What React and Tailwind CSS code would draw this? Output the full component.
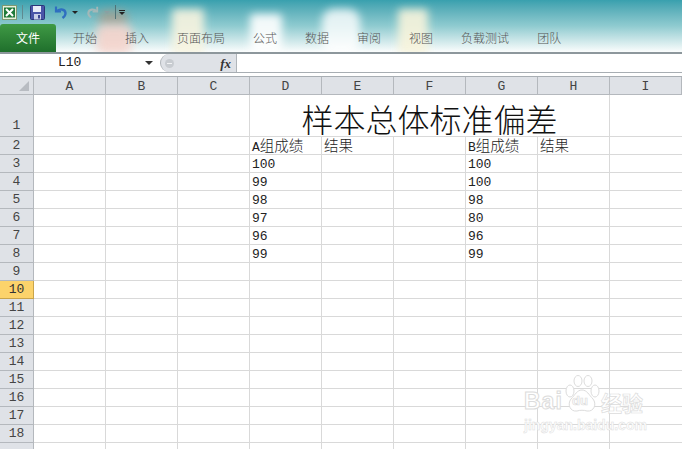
import React from 'react';

const tabs = ['开始', '插入', '页面布局', '公式', '数据', '审阅', '视图', '负载测试', '团队'];
const columns = ['A', 'B', 'C', 'D', 'E', 'F', 'G', 'H', 'I'];
const rowNumbers = [2, 3, 4, 5, 6, 7, 8, 9, 10, 11, 12, 13, 14, 15, 16, 17, 18];

// cell contents by row number
const cells = {
    2: { D: 'A组成绩', E: '结果', G: 'B组成绩', H: '结果' },
    3: { D: '100', G: '100' },
    4: { D: '99', G: '100' },
    5: { D: '98', G: '98' },
    6: { D: '97', G: '80' },
    7: { D: '96', G: '96' },
    8: { D: '99', G: '99' },
};

const QuickAccess = () => (
    <div className="flex items-center h-[24px] pl-[2px] relative z-10">
        <svg width="15" height="15" viewBox="0 0 15 15">
            <rect x="0.5" y="0.5" width="14" height="14" fill="#e8f0dc" stroke="#7d9a72" />
            <rect x="2" y="2.5" width="11" height="10" fill="#1f7a3a" />
            <path d="M4 4l7 7M11 4l-7 7" stroke="#fff" strokeWidth="2" />
        </svg>
        <div className="w-px h-[14px] bg-[#5f8a90] ml-[5px]" />
        <svg className="ml-[7px]" width="15" height="15" viewBox="0 0 15 15">
            <rect x="0.5" y="0.5" width="14" height="14" rx="1" fill="#4a55a8" stroke="#2b3478" />
            <rect x="3" y="1" width="8" height="6" fill="#e8ecf8" />
            <rect x="4" y="9" width="7" height="5.5" fill="#c9cfe8" />
            <rect x="8" y="10" width="2" height="3.5" fill="#3a4490" />
        </svg>
        <svg className="ml-[8px]" width="15" height="14" viewBox="0 0 15 14" fill="none">
            <path d="M3 1.5v5h5" stroke="#2f6fc0" strokeWidth="2.2" />
            <path d="M3.5 6.5C6 3.5 12 3.5 12.5 8c.2 2-1 3.500-3 5" stroke="#2f6fc0" strokeWidth="2.4" />
        </svg>
        <div className="ml-[4px] w-0 h-0 border-x-[3px] border-x-transparent border-t-[3px] border-t-[#222]" />
        <svg className="ml-[8px]" width="14" height="14" viewBox="0 0 15 14" fill="none">
            <path d="M12 1.500v5H7" stroke="#a3b8b8" strokeWidth="2" />
            <path d="M11.500 6.500C9 3.500 3 3.500 2.500 8c-.2 2 1 3.500 3 5" stroke="#a3b8b8" strokeWidth="2.200" />
        </svg>
        <div className="ml-[4px] w-0 h-0 border-x-[3px] border-x-transparent border-t-[3px] border-t-[#8aa0a2]" />
        <div className="w-px h-[14px] bg-[#4f7378] ml-[5px]" />
        <div className="ml-[3px] flex flex-col items-center gap-[1px]">
            <div className="w-[6px] h-px bg-[#222]" />
            <div className="w-0 h-0 border-x-[3px] border-x-transparent border-t-[3px] border-t-[#222]" />
        </div>
    </div>
);

const Ribbon = () => (
    <div className="relative h-[52px] overflow-hidden bg-gradient-to-b from-[#38a0ae] via-[#8fcbd0] to-[#fbfdfd]">
        {/* blurred shapes of the window theme */}
        <div className="absolute left-[98px] top-[10px] w-[30px] h-[16px] rounded-lg bg-[#a89a88] opacity-70 blur-[4px]" />
        <div className="absolute left-[96px] top-[24px] w-[36px] h-[30px] rounded-lg bg-[#f6d4cc] opacity-90 blur-[5px]" />
        <div className="absolute left-[172px] top-[9px] w-[32px] h-[46px] rounded bg-[#f8f4e0] opacity-90 blur-[4px]" />
        <div className="absolute left-[250px] top-[14px] w-[32px] h-[40px] rounded bg-white opacity-90 blur-[4px]" />
        <div className="absolute left-[322px] top-[9px] w-[38px] h-[46px] rounded-xl bg-white opacity-80 blur-[4px]" />
        <div className="absolute left-[398px] top-[9px] w-[30px] h-[46px] rounded bg-[#f8f4dc] opacity-90 blur-[4px]" />
        <QuickAccess />
        <div className="relative z-10 flex items-center h-[28px]">
            <div className="w-[56px] h-[28px] flex items-center justify-center rounded-t-[3px] bg-gradient-to-b from-[#3f9a45] to-[#1f6f2c] text-white text-[12px] font-['Noto_Sans_CJK_SC',sans-serif]">
                文件
            </div>
            <div className="ml-[17px] flex gap-[28px] text-[12px] text-[#555] font-['Noto_Sans_CJK_SC',sans-serif] font-light">
                {tabs.map((tab) => (
                    <span key={tab}>{tab}</span>
                ))}
            </div>
        </div>
    </div>
);

const FormulaBar = () => (
    <div className="h-[21px] border-t-2 border-b-[1px] border-t-[#8d979c] border-b-[#a8aeb3] bg-white flex">
        <div className="w-[160px] flex items-center pl-[58px] pr-[7px] justify-between font-['Liberation_Mono',monospace] text-[13px] text-[#222]">
            <span>L10</span>
            <div className="w-0 h-0 border-x-[4px] border-x-transparent border-t-[4px] border-t-[#333]" />
        </div>
        <div className="w-[77px] flex items-center rounded-l-full bg-[#dfe2e7] border-l border-[#b0b5ba] border-r-[#b0b5ba] border-r pl-[4px] pr-[5px] justify-between">
            <div className="w-[9px] h-[9px] rounded-full bg-[#c8ccd1] flex items-center justify-center">
                <div className="w-[5px] h-px bg-[#f2f3f5]" />
            </div>
            <span className="font-['Liberation_Serif',serif] italic font-bold text-[13px] leading-none text-[#333]">fx</span>
        </div>
        <div className="flex-1" />
    </div>
);

const Cell = ({ text }) => {
    if (!text) return null;
    const numeric = /^[0-9]+$/.test(text);
    // latin letters and digits run narrower than the chinese ones
    return (
        <span className={`pl-[2px] whitespace-nowrap leading-[16px] text-[13px] text-[#222] font-['Liberation_Mono','Noto_Sans_CJK_SC',monospace] ${numeric ? 'pt-[3px]' : 'pt-[1px]'}`}>
            {text.split(/(?<=[A-Z0-9])(?=[^A-Z0-9])/).map((part) =>
                /[A-Z0-9]/.test(part) ? (
                    <span key={part}>{part}</span>
                ) : (
                    <span key={part} className="text-[14.500px] leading-[16px] font-light font-['Noto_Sans_CJK_SC',sans-serif]">{part}</span>
                )
            )}
        </span>
    );
};

const Sheet = () => (
    <div className="grid grid-cols-[34px_repeat(8,72px)_1fr] auto-rows-[18px] grid-rows-[18px_42px] font-['Liberation_Mono',monospace] text-[13px] leading-[16px] text-[#444] mt-[3px] border-t border-[#a8aeb3]">
        {/* header row */}
        <div className="relative bg-[#dfe2e7] border-r border-b border-[#b4b8bd]">
            <div className="absolute right-[4px] bottom-[3px] w-0 h-0 border-l-[10px] border-l-transparent border-b-[10px] border-b-[#b8bcc2]" />
        </div>
        {columns.map((c) => (
            <div key={c} className="bg-[#dfe2e7] border-r border-b border-[#b4b8bd] flex items-center justify-center pt-[2px]">{c}</div>
        ))}

        {/* row 1 with merged title */}
        <div className="bg-[#dfe2e7] border-r border-b border-[#b4b8bd] flex items-end justify-center pb-[2px]">1</div>
        {['A', 'B', 'C'].map((c) => (
            <div key={c} className="border-r border-b border-[#d9d9d9]" />
        ))}
        <div className="col-span-5 border-r border-b border-[#d9d9d9] flex items-end justify-center text-[32px] leading-[36px] text-[#111] font-['Noto_Sans_CJK_SC',sans-serif] font-light">
            样本总体标准偏差
        </div>
        <div className="border-b border-[#d9d9d9]" />

        {rowNumbers.map((row) => (
            <React.Fragment key={row}>
                <div className={`border-r border-b flex items-center justify-center pt-[1px] ${row === 10 ? 'bg-[#fcd36b] border-[#c9a44a] text-[#333]' : 'bg-[#dfe2e7] border-[#b4b8bd]'}`}>
                    {row}
                </div>
                {columns.map((c) => (
                    <div key={c} className={`flex items-center overflow-visible border-b border-[#d9d9d9] ${c === 'I' ? '' : 'border-r'}`}>
                        <Cell text={cells[row]?.[c]} />
                    </div>
                ))}
            </React.Fragment>
        ))}

        {/* row 19 only just shows at the bottom edge */}
        <div className="bg-[#dfe2e7] border-r border-[#b4b8bd]" />
        {columns.map((c) => (
            <div key={c} className={c === 'I' ? '' : 'border-r border-[#d9d9d9]'} />
        ))}
    </div>
);

const Watermark = () => (
    <div className="absolute left-[524px] top-[375px] w-[124px] pointer-events-none flex flex-col items-start text-white">
        <div className="flex items-end h-[38px] font-['Liberation_Sans',sans-serif] font-bold [-webkit-text-stroke:1px_#dcdcdc]">
            <span className="text-[23px] leading-[20px] w-[40px] tracking-[1px] mb-[2px]">Bai</span>
            <div className="relative w-[36px] h-[38px]">
                <svg width="36" height="38" viewBox="0 0 36 38" fill="#fff" stroke="#dcdcdc">
                    <ellipse cx="6" cy="16" rx="4" ry="6" />
                    <ellipse cx="14" cy="6" rx="4" ry="5.500" />
                    <ellipse cx="24" cy="6" rx="4" ry="5.500" />
                    <ellipse cx="31" cy="16" rx="4" ry="6" />
                    <path d="M18 15c-5 0-7 5-11 9-4 5-1 13 6 12 3-1 7-1 10 0 7 1 10-7 6-12-4-4-6-9-11-9z" />
                </svg>
                <span className="absolute left-[8px] bottom-[5px] text-[13px] leading-[14px] [-webkit-text-stroke:0.7px_#dcdcdc]">du</span>
            </div>
            <span className="text-[21px] leading-[22px] whitespace-nowrap font-['Noto_Sans_CJK_SC',sans-serif] ml-[1px] [-webkit-text-stroke:0.7px_#dcdcdc]">经验</span>
        </div>
        <span className="text-[14px] leading-[14px] font-bold whitespace-nowrap [-webkit-text-stroke:0.5px_#dcdcdc] font-['Liberation_Sans',sans-serif] mt-[5px]">jingyan.baidu.com</span>
    </div>
);

export default function App() {
    return (
        <div className="relative w-[682px] h-[449px] overflow-hidden bg-white">
            <Ribbon />
            <FormulaBar />
            <Sheet />
            <Watermark />
        </div>
    );
}
